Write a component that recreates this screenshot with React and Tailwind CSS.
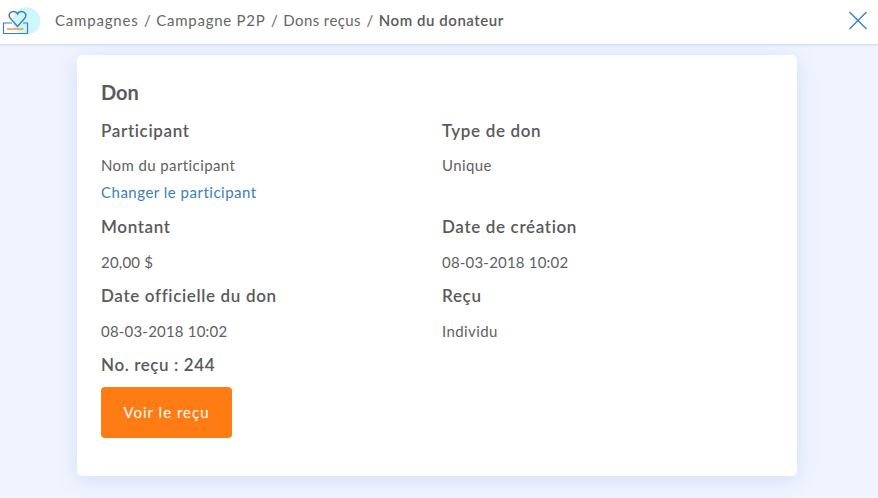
const Field = ({ label, gapClass = "mt-[11px]", valueClass = "tracking-[0.4px]", children }) => (
  <div>
    <h3 className="text-[17px] leading-[24px] font-semibold tracking-[0.65px] text-[#5a5a5a]">{label}</h3>
    <p className={`text-[15px] leading-[24px] text-[#5f5f5f] ${gapClass} ${valueClass}`}>{children}</p>
  </div>
);

const Logo = () => (
  <svg width="42" height="36" viewBox="0 2 42 36" fill="none" className="shrink-0">
    <circle cx="26.5" cy="21" r="13.8" fill="#cdf7fd" />
    <path d="M17.5 26.5 L10.5 18.5 C7.5 15 10 11.5 13.5 11.5 C15.5 11.5 16.8 12.6 17.5 14 C18.2 12.6 19.5 11.5 21.5 11.5 C25 11.5 27.5 15 24.5 18.5 Z" stroke="#3f7fb8" strokeWidth="1.4" />
    <path d="M12 23 H3.5 V33.5 H27.5 V23 H23" stroke="#3f7fb8" strokeWidth="1.2" />
    <path d="M7 29 H23.5" stroke="#f29a5c" strokeWidth="1.6" />
  </svg>
);

export default function App() {
  return (
    <div className="h-[498px] w-[878px] overflow-hidden bg-[#f0f4ff] font-['Lato',sans-serif]">
      <header className="flex h-[45px] items-center justify-between border-b border-[#d8dfe6] bg-white pr-[10px] pb-[4px] shadow-[0_1px_3px_rgba(0,0,0,0.06)]">
        <div className="flex items-center">
          <Logo />
          <nav className="ml-[13px] flex items-center text-[15px] text-[#666666]">
            <span className="tracking-[0.8px]">Campagnes</span>
            <span className="mx-[5.5px]">/</span>
            <span className="tracking-[0.75px]">Campagne P2P</span>
            <span className="mx-[5.5px]">/</span>
            <span className="tracking-[0.4px]">Dons reçus</span>
            <span className="mx-[5.5px]">/</span>
            <span className="font-semibold tracking-[0.55px] text-[#5a5a5a]">Nom du donateur</span>
          </nav>
        </div>
        <svg width="20" height="20" viewBox="0 0 20 20" fill="none" stroke="#3c84c6" strokeWidth="1.5">
          <path d="M1.5 2 L18.5 19 M18.5 2 L1.5 19" />
        </svg>
      </header>

      <main className="mt-[10px] ml-[77px] h-[421px] w-[720px] rounded-[5px] bg-white px-[24px] pt-[25px] shadow-[0_4px_22px_rgba(70,110,220,0.16)]">
        <h2 className="text-[20px] leading-[24px] font-bold text-[#5a5a5a]">Don</h2>
        <div className="mt-[15px] grid grid-cols-[341px_1fr]">
          <div>
            <Field label="Participant" gapClass="mt-[10px]">Nom du participant</Field>
            <a className="mt-[3px] block text-[15px] leading-[24px] tracking-[0.5px] text-[#3a80bd]">Changer le participant</a>
          </div>
          <Field label="Type de don" gapClass="mt-[10px]">Unique</Field>
          <div className="mt-[11px]"><Field label="Montant" valueClass="tracking-[0.2px]">20,00 $</Field></div>
          <div className="mt-[11px]"><Field label="Date de création" valueClass="tracking-[0.2px]">08-03-2018 10:02</Field></div>
          <div className="mt-[10px]"><Field label="Date officielle du don" valueClass="tracking-[0.2px]">08-03-2018 10:02</Field></div>
          <div className="mt-[10px]"><Field label="Reçu">Individu</Field></div>
        </div>
        <p className="mt-[10px] text-[17px] leading-[24px] font-semibold tracking-[0.6px] text-[#5a5a5a]">No. reçu : 244</p>
        <button className="mt-[10px] h-[51px] w-[131px] rounded-[4px] bg-[#ff7c14] text-[15px] tracking-[1px] text-white">Voir le reçu</button>
      </main>
    </div>
  );
}
